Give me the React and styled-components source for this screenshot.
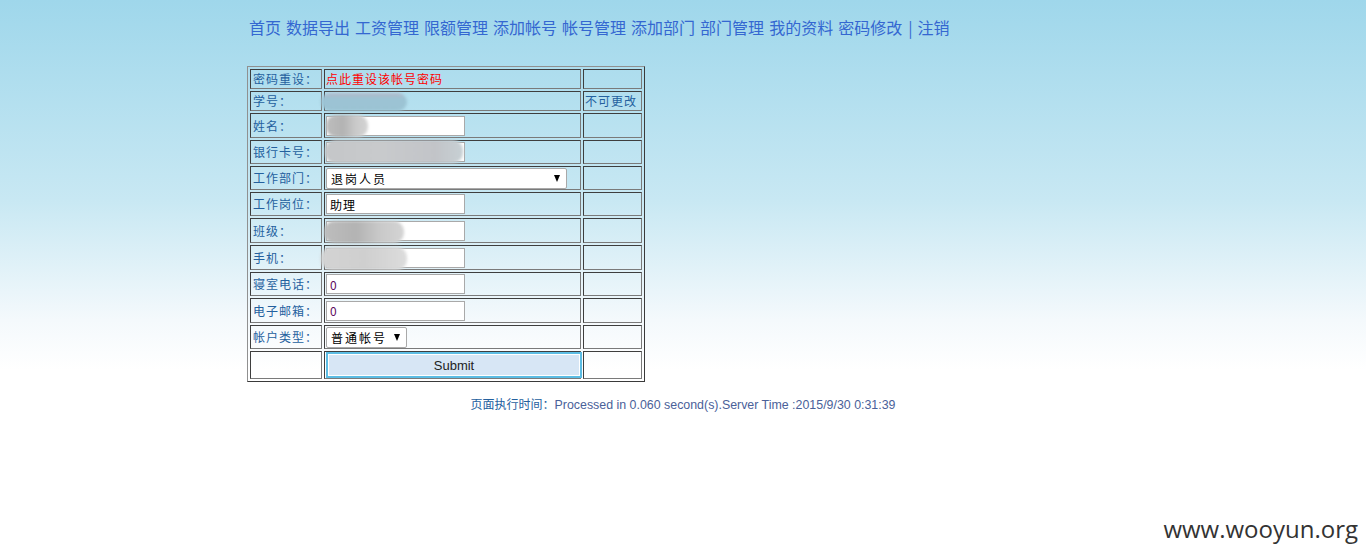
import React from 'react';
import styled, { createGlobalStyle } from 'styled-components';

const GlobalStyle = createGlobalStyle`
    html, body {
        margin: 0;
        padding: 0;
        min-height: 100%;
    }
    body {
        height: 560px;
        background: #ffffff linear-gradient(to bottom, #9fd7eb 0px, #c8e8f3 200px, #f4f9fc 320px, #ffffff 370px) no-repeat;
        font-family: "Noto Sans CJK SC", "Liberation Sans", sans-serif;
        font-size: 12px;
    }
`;

const Page = styled.div`
    width: 872px;
    margin: 0 auto;
    padding-top: 16px;
`;

const Nav = styled.div`
    padding-left: 2px;
    font-size: 16px;
    line-height: 22px;
    color: #3467d1;
    white-space: nowrap;
`;

const NavLink = styled.a`
    color: #3467d1;
    text-decoration: none;
    margin-right: 5px;
`;

const Sep = styled.span`
    margin: 0 5px 0 1px;
`;

const FormTable = styled.table`
    margin-top: 28px;
    border-collapse: separate;
    border-spacing: 2px;
    table-layout: fixed;
    width: 398px;
    border: 1px solid;
    border-color: #909090 #3a3a3a #3a3a3a #909090;
`;

const Row = styled.tr`
    height: ${p => p.$h}px;
`;

const Cell = styled.td`
    box-sizing: border-box;
    border: 1px solid;
    border-color: #3e3e3e #7a7a7a #7a7a7a #3e3e3e;
    padding: 0 1px;
    vertical-align: middle;
    white-space: nowrap;
    font-size: 12px;
    line-height: 16px;
    letter-spacing: 1px;
    color: #24609e;
    position: relative;
`;

const Label = styled(Cell)`
    padding-left: 2px;
`;

const Warn = styled.a`
    color: #ff0000;
    text-decoration: none;
`;

const Field = styled.span`
    position: relative;
    display: inline-block;
    vertical-align: middle;
`;

const TextInput = styled.input`
    box-sizing: border-box;
    width: 139px;
    height: 20px;
    margin: 0;
    padding: 0 3px;
    border: 1px solid #a9a9a9;
    background: #ffffff;
    font-family: "Noto Sans CJK SC", "Liberation Sans", sans-serif;
    font-size: 12px;
    letter-spacing: 1px;
    color: ${p => p.$tone || '#000000'};
    outline: none;
`;

const SelectBox = styled.span`
    position: relative;
    display: inline-block;
    vertical-align: middle;

    &::after {
        content: '';
        position: absolute;
        right: 7px;
        top: 7px;
        width: 0;
        height: 0;
        border-left: 3.5px solid transparent;
        border-right: 3.5px solid transparent;
        border-top: 7px solid #000;
        pointer-events: none;
    }
`;

const Select = styled.select`
    appearance: none;
    box-sizing: border-box;
    width: ${p => p.$w}px;
    height: 21px;
    margin: 0;
    padding: 0 0 0 4px;
    border: 1px solid #a9a9a9;
    border-radius: 2px;
    background: #ffffff;
    font-family: "Noto Sans CJK SC", "Liberation Sans", sans-serif;
    font-size: 12px;
    letter-spacing: 2px;
    color: #000;
    outline: none;
`;

const Smudge = styled.span`
    position: absolute;
    left: ${p => p.$left}px;
    top: ${p => p.$top}px;
    width: ${p => p.$w}px;
    height: ${p => p.$h}px;
    border-radius: 10px;
    background: ${p => p.$bg};
    filter: blur(1.5px);
`;

const SubmitButton = styled.button`
    box-sizing: border-box;
    width: 256px;
    height: 26px;
    margin: 0;
    border: 2px solid #5cbde4;
    box-shadow: inset 0 0 0 1px #ffffff;
    background: #d7e6f5;
    font-family: "Liberation Sans", Arial, sans-serif;
    font-size: 13px;
    color: #222;
`;

const Footer = styled.div`
    margin-top: 14px;
    text-align: center;
    font-size: 12px;
    line-height: 16px;
`;

const FooterLabel = styled.span`
    color: #24609e;
`;

const FooterInfo = styled.span`
    font-family: "Liberation Sans", Arial, sans-serif;
    font-size: 12.4px;
    color: #4a6199;
`;

const Watermark = styled.div`
    position: absolute;
    right: 8px;
    top: 512px;
    font-family: "Open Sans", "DejaVu Sans", sans-serif;
    font-size: 24px;
    color: #333333;
`;

const navItems = ['首页', '数据导出', '工资管理', '限额管理', '添加帐号', '帐号管理', '添加部门', '部门管理', '我的资料', '密码修改'];

const grayBlob = 'linear-gradient(90deg, #bdbdbd, #b3b3b3 40%, #c9c9c9 70%, #d4d4d4)';

export default function App() {
    return (
        <>
            <GlobalStyle />
            <Page>
                <Nav>
                    {navItems.map(t => <NavLink key={t}>{t}</NavLink>)}
                    <Sep>|</Sep>
                    <NavLink>注销</NavLink>
                </Nav>

                <FormTable>
                    <colgroup>
                        <col style={{ width: 72 }} />
                        <col style={{ width: 257 }} />
                        <col style={{ width: 59 }} />
                    </colgroup>
                    <tbody>
                        <Row $h={20}>
                            <Label>密码重设：</Label>
                            <Cell><Warn>点此重设该帐号密码</Warn></Cell>
                            <Cell />
                        </Row>
                        <Row $h={20}>
                            <Label>学号：</Label>
                            <Cell>
                                <Smudge $left={-4} $top={1} $w={86} $h={18} $bg="linear-gradient(180deg, #b4b6c6, #9cc3d4 30%, #9bc3d3)" />
                            </Cell>
                            <Cell>不可更改</Cell>
                        </Row>
                        <Row $h={25}>
                            <Label>姓名：</Label>
                            <Cell>
                                <Field>
                                    <TextInput defaultValue="" />
                                    <Smudge $left={0} $top={-1} $w={42} $h={22} $bg={grayBlob} />
                                </Field>
                            </Cell>
                            <Cell />
                        </Row>
                        <Row $h={24}>
                            <Label>银行卡号：</Label>
                            <Cell>
                                <Field>
                                    <TextInput defaultValue="" />
                                    <Smudge $left={-1} $top={-2} $w={138} $h={23} $bg="linear-gradient(90deg, #c4c6c8, #c8cacc 40%, #c2c4c8 80%, #c7d0d4)" />
                                </Field>
                            </Cell>
                            <Cell />
                        </Row>
                        <Row $h={24}>
                            <Label>工作部门：</Label>
                            <Cell>
                                <SelectBox>
                                    <Select $w={241} defaultValue="1">
                                        <option value="1">退岗人员</option>
                                    </Select>
                                </SelectBox>
                            </Cell>
                            <Cell />
                        </Row>
                        <Row $h={24}>
                            <Label>工作岗位：</Label>
                            <Cell><TextInput defaultValue="助理" /></Cell>
                            <Cell />
                        </Row>
                        <Row $h={25}>
                            <Label>班级：</Label>
                            <Cell>
                                <Field>
                                    <TextInput defaultValue="" />
                                    <Smudge $left={-2} $top={0} $w={80} $h={22} $bg={grayBlob} />
                                </Field>
                            </Cell>
                            <Cell />
                        </Row>
                        <Row $h={25}>
                            <Label>手机：</Label>
                            <Cell>
                                <Field>
                                    <TextInput defaultValue="" />
                                    <Smudge $left={-5} $top={-1} $w={86} $h={23} $bg="linear-gradient(90deg, #d3d3d3, #cfcfcf 50%, #dcdcdc)" />
                                </Field>
                            </Cell>
                            <Cell />
                        </Row>
                        <Row $h={24}>
                            <Label>寝室电话：</Label>
                            <Cell><TextInput defaultValue="0" $tone="#5e0a5e" /></Cell>
                            <Cell />
                        </Row>
                        <Row $h={25}>
                            <Label>电子邮箱：</Label>
                            <Cell><TextInput defaultValue="0" $tone="#5e0a5e" /></Cell>
                            <Cell />
                        </Row>
                        <Row $h={24}>
                            <Label>帐户类型：</Label>
                            <Cell>
                                <SelectBox>
                                    <Select $w={81} defaultValue="1">
                                        <option value="1">普通帐号</option>
                                    </Select>
                                </SelectBox>
                            </Cell>
                            <Cell />
                        </Row>
                        <Row $h={28}>
                            <Cell />
                            <Cell><SubmitButton type="submit">Submit</SubmitButton></Cell>
                            <Cell />
                        </Row>
                    </tbody>
                </FormTable>
            </Page>

            <Footer>
                <FooterLabel>页面执行时间：</FooterLabel>
                <FooterInfo>Processed in 0.060 second(s).Server Time :2015/9/30 0:31:39</FooterInfo>
            </Footer>

            <Watermark>www.wooyun.org</Watermark>
        </>
    );
}
